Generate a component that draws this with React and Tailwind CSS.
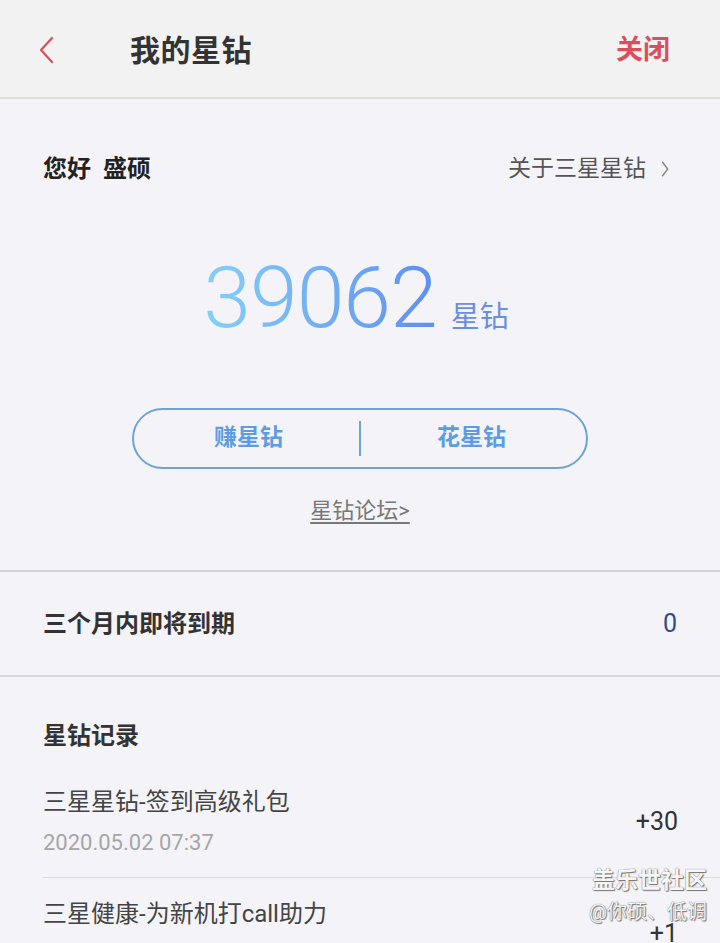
import React from "react";

const cjk = { fontFamily: 'Roboto, "Noto Sans CJK SC", sans-serif' };

function Chevron({ className }) {
    return (
        <svg viewBox="0 0 20 30" className={className} fill="none" stroke="currentColor" strokeWidth="2.2" strokeLinecap="round" strokeLinejoin="round">
            <path d="M16 3 L5 15 L16 27" />
        </svg>
    );
}

function Header() {
    return (
        <div className="h-[99px] bg-[#f2f2f2] border-b-2 border-[#dedede] flex items-center px-[36px] pt-[3px]">
            <Chevron className="w-[20px] h-[30px] text-[#d8505e]" />
            <div className="ml-[74px] text-[30px] font-bold text-[#333] tracking-[0.5px]">我的星钻</div>
            <div className="ml-auto mr-[14px] text-[27px] font-bold text-[#d8505e]">关闭</div>
        </div>
    );
}

function Balance() {
    return (
        <div className="px-[43px] pt-[52px] pb-[43px] border-b-2 border-[#d2d2d6]">
            <div className="flex items-center justify-between">
                <div className="text-[24px] font-bold text-[#222]">您好&nbsp;&nbsp;盛硕</div>
                <div className="flex items-center mr-[7px] text-[23px] text-[#555]">
                    关于三星星钻
                    <svg viewBox="0 0 10 20" className="w-[10px] h-[18px] ml-[14px]" fill="none" stroke="#888" strokeWidth="1.6">
                        <path d="M2 2 L8 10 L2 18" />
                    </svg>
                </div>
            </div>
            <div className="flex items-baseline justify-center mt-[68px] pr-[8px]">
                <span className="text-[86px] font-light leading-none bg-gradient-to-r from-[#86d0f7] to-[#5f8ef0] bg-clip-text text-transparent tracking-[-1px]" style={{ fontFamily: "Roboto, sans-serif" }}>
                    39062
                </span>
                <span className="ml-[14px] text-[29px] text-[#6c8ee2]">星钻</span>
            </div>
            <div className="mx-auto mt-[67px] w-[456px] h-[61px] rounded-full border-2 border-[#6ea3d8] flex items-center">
                <div className="flex-1 text-center text-[23px] font-bold text-[#5c9de2] pl-[4px]">赚星钻</div>
                <div className="w-[2px] h-[35px] bg-[#6ea3d8]" />
                <div className="flex-1 text-center text-[23px] font-bold text-[#5c9de2] pr-[4px]">花星钻</div>
            </div>
            <div className="mt-[25px] text-center">
                <span className="text-[22px] text-[#777] underline underline-offset-[4px]">星钻论坛&gt;</span>
            </div>
        </div>
    );
}

function Expiring() {
    return (
        <div className="h-[105px] px-[43px] flex items-center justify-between border-b-2 border-[#d8d8dc]">
            <div className="text-[24px] font-bold text-[#333]">三个月内即将到期</div>
            <div className="text-[25px] text-[#2c4c90]">0</div>
        </div>
    );
}

const records = [
    { title: "三星星钻-签到高级礼包", time: "2020.05.02 07:37", amount: "+30" },
    { title: "三星健康-为新机打call助力", time: "2020.05.02 07:30", amount: "+1" },
];

function Records() {
    return (
        <div className="pl-[43px] pt-[41px]">
            <div className="text-[24px] font-bold text-[#333]">星钻记录</div>
            <div className="mt-[12px]">
                {records.map((r, i) => (
                    <div key={i} className="flex items-center pr-[42px] h-[112px] border-b border-[#dcdcdc]">
                        <div className="flex-1">
                            <div className="text-[24px] leading-[34px] text-[#444]">{r.title}</div>
                            <div className="mt-[9px] text-[22px] leading-[30px] text-[#a6a6a6]">{r.time}</div>
                        </div>
                        <div className="text-[25px] text-[#333]">{r.amount}</div>
                    </div>
                ))}
            </div>
        </div>
    );
}

export default function App() {
    return (
        <div className="relative w-[720px] h-[943px] overflow-hidden bg-[#f4f4f8]" style={cjk}>
            <Header />
            <Balance />
            <Expiring />
            <Records />
            <div className="absolute right-[13px] top-[867px] text-right leading-[1.25] text-[#f6f6f6]" style={{ textShadow: "0 0 1px #555, 1px 1px 1px #777" }}>
                <div className="text-[23px] font-bold">盖乐世社区</div>
                <div className="mt-[4px] text-[20px]">@你硕、低调</div>
            </div>
        </div>
    );
}
